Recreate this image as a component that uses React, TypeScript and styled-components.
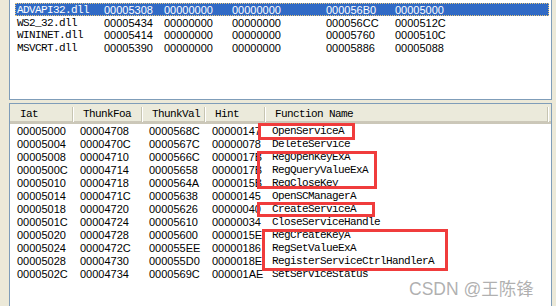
import styled, { createGlobalStyle } from 'styled-components';

const GlobalStyle = createGlobalStyle({
	'html, body': {
		margin: 0,
		padding: 0,
		background: '#ece9d8',
	},
});

const modules = [
	['ADVAPI32.dll', '00005308', '00000000', '00000000', '000056B0', '00005000'],
	['WS2_32.dll', '00005434', '00000000', '00000000', '000056CC', '0000512C'],
	['WININET.dll', '00005414', '00000000', '00000000', '00005760', '0000510C'],
	['MSVCRT.dll', '00005390', '00000000', '00000000', '00005886', '00005088'],
];

const imports = [
	['00005000', '00004708', '0000568C', '00000147', 'OpenServiceA'],
	['00005004', '0000470C', '0000567C', '00000078', 'DeleteService'],
	['00005008', '00004710', '0000566C', '0000017B', 'RegOpenKeyExA'],
	['0000500C', '00004714', '00005658', '0000017B', 'RegQueryValueExA'],
	['00005010', '00004718', '0000564A', '0000015B', 'RegCloseKey'],
	['00005014', '0000471C', '00005638', '00000145', 'OpenSCManagerA'],
	['00005018', '00004720', '00005626', '00000040', 'CreateServiceA'],
	['0000501C', '00004724', '00005610', '00000034', 'CloseServiceHandle'],
	['00005020', '00004728', '00005600', '0000015E', 'RegCreateKeyA'],
	['00005024', '0000472C', '000055EE', '00000186', 'RegSetValueExA'],
	['00005028', '00004730', '000055D0', '0000018E', 'RegisterServiceCtrlHandlerA'],
	['0000502C', '00004734', '0000569C', '000001AE', 'SetServiceStatus'],
];

const headers = ['Iat', 'ThunkFoa', 'ThunkVal', 'Hint', 'Function Name'];

// annotation boxes drawn over the screenshot
const marks = [
	{ left: 258, top: 123, width: 97, height: 17 },
	{ left: 257, top: 151, width: 120, height: 38 },
	{ left: 257, top: 202, width: 118, height: 15 },
	{ left: 262, top: 229, width: 186, height: 42 },
];

export default function App() {
	return (
		<Page>
			<GlobalStyle />
			<ModulePanel>
				{modules.map((row, i) => (
					<ModuleRow key={row[0]} $selected={i === 0}>
						<MonoCell>{row[0]}</MonoCell>
						{row.slice(1).map((v, j) => (
							<NumCell key={j}>{v}</NumCell>
						))}
					</ModuleRow>
				))}
			</ModulePanel>
			<ImportPanel>
				<HeaderRow>
					{headers.map((h) => (
						<HeaderCell key={h}>{h}</HeaderCell>
					))}
				</HeaderRow>
				{imports.map((row) => (
					<ImportRow key={row[0]}>
						{row.slice(0, 4).map((v, j) => (
							<NumCell key={j}>{v}</NumCell>
						))}
						<MonoCell>{row[4]}</MonoCell>
					</ImportRow>
				))}
			</ImportPanel>
			{marks.map((m, i) => (
				<Mark key={i} style={m} />
			))}
			<Watermark>CSDN @王陈锋</Watermark>
		</Page>
	);
}

const Page = styled.div({
	position: 'relative',
	display: 'flex',
	flexDirection: 'column',
	height: '306px',
	width: '556px',
	boxSizing: 'border-box',
	padding: '0 4px 0 9px',
	overflow: 'hidden',
	background: '#ece9d8',
});

const ModulePanel = styled.div({
	height: '100px',
	boxSizing: 'border-box',
	padding: '3px 2px 0 5px',
	background: '#ffffff',
	border: '1px solid #7f9db9',
	borderTop: 'none',
});

const ModuleRow = styled.div<{ $selected: boolean }>((p) => ({
	display: 'grid',
	gridTemplateColumns: '87px 60px 68px 94px 69px 1fr',
	height: '13px',
	lineHeight: '14px',
	marginBottom: '-0.5px',
	paddingLeft: '2px',
	background: p.$selected ? '#316ac5' : 'transparent',
	color: p.$selected ? '#ffffff' : '#000000',
	outline: p.$selected ? '1px dotted #e8c77a' : 'none',
	outlineOffset: '-1px',
	whiteSpace: 'nowrap',
}));

const MonoCell = styled.span({
	fontFamily: '"Liberation Mono", monospace',
	fontSize: '11px',
	letterSpacing: '-0.6px',
	whiteSpace: 'nowrap',
});

const NumCell = styled.span({
	fontFamily: '"Liberation Sans", Arial, sans-serif',
	fontSize: '11px',
	whiteSpace: 'nowrap',
});

const ImportPanel = styled.div({
	flex: 1,
	marginTop: '3px',
	marginBottom: '-10px',
	background: '#ffffff',
	border: '1px solid #7f9db9',
});

const HeaderRow = styled.div({
	display: 'grid',
	gridTemplateColumns: '63px 69px 63px 60px 283px 1fr',
	height: '20px',
	boxSizing: 'border-box',
	background: '#ebeadb',
	borderStyle: 'solid',
	borderWidth: '0 0 3px 0',
	borderImage: 'linear-gradient(#e2decd, #d6d2c2, #cbc7b8) 1',
});

const HeaderCell = styled.div({
	position: 'relative',
	paddingLeft: '10px',
	paddingTop: '2px',
	lineHeight: '17px',
	fontFamily: '"Liberation Mono", monospace',
	fontSize: '11px',
	letterSpacing: '-0.6px',
	color: '#000000',
	'&::after': {
		content: '""',
		position: 'absolute',
		right: 0,
		top: '3px',
		bottom: '1px',
		width: '1px',
		background: '#c7c5b2',
		boxShadow: '1px 0 0 #ffffff',
	},
});

const ImportRow = styled.div({
	display: 'grid',
	gridTemplateColumns: '63px 69px 63px 60px 1fr',
	height: '13px',
	lineHeight: '14px',
	color: '#000000',
	'& > span': {
		paddingLeft: '7px',
	},
});

const Mark = styled.div({
	position: 'absolute',
	boxSizing: 'border-box',
	border: '3px solid #f03c3c',
});

const Watermark = styled.div({
	position: 'absolute',
	left: '409px',
	top: '275px',
	fontFamily: '"Liberation Sans", "Noto Sans CJK SC", sans-serif',
	fontSize: '17.5px',
	color: 'rgba(150, 150, 150, 0.75)',
	whiteSpace: 'nowrap',
});
